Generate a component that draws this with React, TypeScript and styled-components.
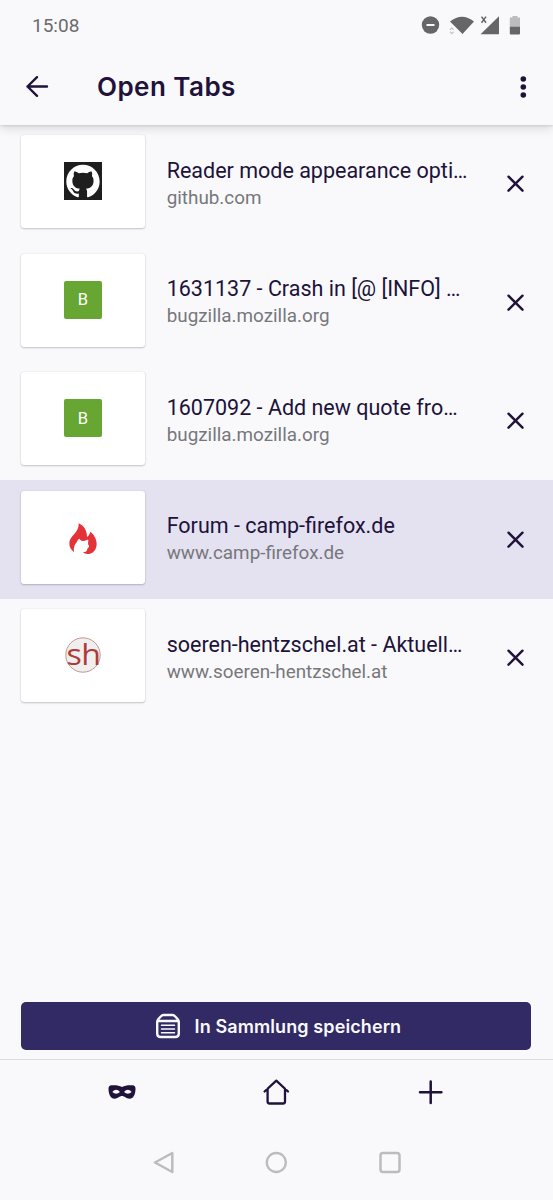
import React from 'react';
import styled, { createGlobalStyle } from 'styled-components';

const ink = '#20123a';
const GlobalStyle = createGlobalStyle`
  *, *::before, *::after { box-sizing: border-box; }
  body { margin: 0; background: #f9f9fb; }
  button { border: 0; padding: 0; background: none; color: inherit; font: inherit; display: flex; }
  svg { display: block; flex: none; overflow: visible; }
`;

const Screen = styled.div`
  width: 553px;
  height: 1200px;
  display: flex;
  flex-direction: column;
  overflow: hidden;
  background: #f9f9fb;
  color: ${ink};
  font-family: Roboto, 'Liberation Sans', sans-serif;
`;

const Header = styled.header`
  flex: none;
  height: 124.5px;
  background: #f9f9fb;
  box-shadow: 0 1px 2px rgba(0, 0, 0, 0.1), 0 3px 10px rgba(0, 0, 0, 0.14);
  z-index: 1;
`;

const StatusBar = styled.div`
  height: 50px;
  padding: 0 32px;
  display: flex;
  align-items: center;
  justify-content: space-between;
  color: #6b6b6d;
`;

const Clock = styled.span`
  font-size: 19px;
  line-height: 24px;
  padding-top: 2px;
`;

const StatusIcons = styled.svg`
  width: 103px;
  height: 24px;
`;

const Toolbar = styled.div`
  height: 74px;
  padding: 0 19px 0 25px;
  display: flex;
  align-items: center;
`;

const Heading = styled.h1`
  flex: 1;
  margin: 0 0 0 48px;
  font: 600 26px/32px Inter, sans-serif;
  letter-spacing: 0.45px;
`;

const TabList = styled.ul`
  flex: 1;
  margin: 0;
  padding: 0;
  list-style: none;
`;

const TabRow = styled.li<{ $selected?: boolean }>`
  height: 118.5px;
  padding: 0 27px 0 21.4px;
  display: flex;
  align-items: center;
  background: ${(p) => (p.$selected ? '#e4e1f1' : 'transparent')};
`;

const Thumbnail = styled.div`
  flex: none;
  width: 124px;
  height: 93px;
  padding: 0 0.8px 1px 0;
  margin-bottom: 4.2px;
  border-radius: 3px;
  display: flex;
  align-items: center;
  justify-content: center;
  background: #fff;
  box-shadow: 0 1px 2px rgba(0, 0, 0, 0.2), 0 0 2px rgba(0, 0, 0, 0.1);
`;

const Letter = styled.span`
  width: 38px;
  height: 38px;
  border-radius: 2px;
  display: flex;
  align-items: center;
  justify-content: center;
  background: #67a632;
  color: #fff;
  font-size: 16.5px;
`;

const TabText = styled.div`
  flex: 1;
  min-width: 0;
  margin: 0 30px 0.2px 21.3px;
`;

const TabTitle = styled.div`
  font-size: 21.5px;
  line-height: 28px;
  white-space: nowrap;
`;

const TabUrl = styled.div`
  font-size: 18.85px;
  line-height: 26px;
  color: #77777b;
  white-space: nowrap;
`;

const SaveButton = styled.button`
  flex: none;
  height: 48px;
  margin: 0 21.6px 8.5px 21.4px;
  padding-left: 3px;
  border-radius: 5px;
  align-items: center;
  justify-content: center;
  gap: 14px;
  background: #312a65;
  color: #f9f9fb;
  font: 600 18px/24px Inter, sans-serif;
  letter-spacing: 0.1px;
`;

const SaveLabel = styled.span`
  padding-top: 1px;
`;

const ActionBar = styled.nav`
  flex: none;
  height: 67px;
  border-top: 1px solid #dcdce0;
  padding: 0 106.5px 1px 106px;
  display: flex;
  align-items: center;
  justify-content: space-between;
`;

const SystemBar = styled.nav`
  flex: none;
  height: 74.5px;
  padding: 0 150.5px 0 149.5px;
  display: flex;
  align-items: center;
  justify-content: space-between;
  color: #bcbcbe;
`;

const GithubIcon = () => (
  <svg width="38" height="38" viewBox="0 0 38 38">
    <path fill="#1f1e1f" d="M0 0h38v38H0z" />
    <path
      transform="translate(2.3 2.3) scale(1.39)"
      fill="#fff"
      d="M12 .297c-6.63 0-12 5.373-12 12 0 5.303 3.438 9.8 8.205 11.385.6.113.82-.258.82-.577 0-.285-.01-1.04-.015-2.04-3.338.724-4.042-1.61-4.042-1.61C4.422 18.07 3.633 17.7 3.633 17.7c-1.087-.744.084-.729.084-.729 1.205.084 1.838 1.236 1.838 1.236 1.07 1.835 2.809 1.305 3.495.998.108-.776.417-1.305.76-1.605-2.665-.3-5.466-1.332-5.466-5.93 0-1.31.465-2.38 1.235-3.22-.135-.303-.54-1.523.105-3.176 0 0 1.005-.322 3.3 1.23.96-.267 1.98-.399 3-.405 1.02.006 2.04.138 3 .405 2.28-1.552 3.285-1.23 3.285-1.23.645 1.653.24 2.873.12 3.176.765.84 1.23 1.91 1.23 3.22 0 4.61-2.805 5.625-5.475 5.92.42.36.81 1.096.81 2.22 0 1.606-.015 2.896-.015 3.286 0 .315.21.69.825.57C20.565 22.092 24 17.592 24 12.297c0-6.627-5.373-12-12-12"
    />
  </svg>
);

const FlameIcon = () => (
  <svg width="38" height="38" viewBox="0 0 114 114" fill="#e53238">
    <path d="M44 16C59 22 69 37 69 57C74 53 77 49 79 41C89 48 98 63 98 77C98 96 86 108 71 108C65 108 60 106 57 102C64 103 70 99 70 92C76 88 77 84 72 79L73 66C68 64 65 69 60 69C55 69 50 68 46 62L42 65L38 73C32 79 28 90 30 102C21 95 16 87 16 77C15 53 46 46 44 16Z" />
  </svg>
);

const ShIcon = () => (
  <svg width="38" height="38" viewBox="0 0 38 38">
    <circle cx="19" cy="19" r="17.2" fill="#efefef" stroke="#c08a80" strokeWidth="0.9" />
    <text
      x="2.5"
      y="28.6"
      fontFamily="'Open Sans', sans-serif"
      fontSize="30"
      fontWeight="400"
      letterSpacing="-0.5"
      textLength="34"
      lengthAdjust="spacingAndGlyphs"
      fill="#b03a34"
    >
      sh
    </text>
  </svg>
);

const CloseIcon = () => (
  <svg width="21" height="21" viewBox="0 0 21 21" fill="none" stroke={ink} strokeWidth="2.4" strokeLinecap="round">
    <path d="M3.5 3.7l14 14M17.5 3.7l-14 14" />
  </svg>
);

const tabs = [
  { title: 'Reader mode appearance opti…', url: 'github.com', icon: <GithubIcon /> },
  { title: '1631137 - Crash in [@ [INFO] …', url: 'bugzilla.mozilla.org', icon: <Letter>B</Letter> },
  { title: '1607092 - Add new quote fro…', url: 'bugzilla.mozilla.org', icon: <Letter>B</Letter> },
  { title: 'Forum - camp-firefox.de', url: 'www.camp-firefox.de', icon: <FlameIcon />, selected: true },
  { title: 'soeren-hentzschel.at - Aktuell…', url: 'www.soeren-hentzschel.at', icon: <ShIcon /> },
];

export default function App() {
  return (
    <Screen>
      <GlobalStyle />
      <Header>
        <StatusBar>
          <Clock>15:08</Clock>
          <StatusIcons viewBox="0 0 103 24" fill="#666668">
            <circle cx="12.5" cy="12" r="8.7" />
            <path d="M8.5 12h8" stroke="#f9f9fb" strokeWidth="2" />
            <path d="M32 8.5Q44 -1 56 8.5L44.5 21Z" />
            <path d="M32 16.8l1.8-1.8 1.8 1.8M32 18.8l1.8 1.8 1.8-1.8" fill="none" stroke="#c5c5c7" strokeWidth="1.3" />
            <path d="M62.5 21.2L81 3.3V21.2Z" />
            <path d="M63.5 3.6l4.5 6.2M68 3.6l-4.5 6.2" stroke="#666668" strokeWidth="1.5" />
            <path fill="#bcbcbe" d="M94.5 3h5v1.5h2.5V14H91.8V4.5h2.7z" />
            <path d="M91.8 13.8H102v6.7q0 1-1 1h-8.2q-1 0-1-1z" />
          </StatusIcons>
        </StatusBar>
        <Toolbar>
          <button aria-label="Back">
            <svg width="24" height="24" viewBox="0 0 24 24" fill="none" stroke={ink} strokeWidth="2.4" strokeLinecap="round" strokeLinejoin="round">
              <path d="M22 11.5H2.5M12 2.2L2.5 11.5l9.5 9.3" />
            </svg>
          </button>
          <Heading>Open Tabs</Heading>
          <button aria-label="Menu">
            <svg width="22" height="24" viewBox="0 0 22 24" fill={ink}>
              <circle cx="11.3" cy="4" r="2.8" />
              <circle cx="11.3" cy="12" r="2.8" />
              <circle cx="11.3" cy="20" r="2.8" />
            </svg>
          </button>
        </Toolbar>
      </Header>
      <TabList>
        {tabs.map((tab) => (
          <TabRow key={tab.title} $selected={tab.selected}>
            <Thumbnail>{tab.icon}</Thumbnail>
            <TabText>
              <TabTitle>{tab.title}</TabTitle>
              <TabUrl>{tab.url}</TabUrl>
            </TabText>
            <button aria-label="Close tab"><CloseIcon /></button>
          </TabRow>
        ))}
      </TabList>
      <SaveButton>
        <svg width="26" height="26" viewBox="0 0 26 26" fill="none" stroke="#f9f9fb" strokeLinecap="round" strokeLinejoin="round">
          <path strokeWidth="2.4" d="M2.2 9Q2.2 7.5 3.2 6.3L6 3.2Q7 2 8.5 2h9Q19 2 20 3.2L22.8 6.3Q23.8 7.5 23.8 9V20.5Q23.8 24 20.3 24H5.7Q2.2 24 2.2 20.5ZM2.8 8H23.2" />
          <path strokeWidth="1.5" d="M6.5 12.2h13M6.5 16h13M6.5 19.8h13" />
        </svg>
        <SaveLabel>In Sammlung speichern</SaveLabel>
      </SaveButton>
      <ActionBar>
        <button aria-label="Private tabs">
          <svg width="32" height="32" viewBox="0 0 32 32">
            <path fill={ink} fillRule="evenodd" d="M16 11C19 9.2 23 9 26.5 9.3Q29.5 9.5 29.5 12.5C29.5 18 27.5 22.7 23.5 22.7C20 22.7 18.500 20 16 20C13.500 20 12 22.7 8.5 22.7C4.5 22.7 2.5 18 2.5 12.5Q2.5 9.5 5.500 9.3C9 9 13 9.2 16 11ZM6.300 16Q10.200 11.300 14 16Q10.200 19.500 6.300 16ZM18 16Q21.800 11.300 25.700 16Q21.800 19.500 18 16Z" />
          </svg>
        </button>
        <button aria-label="Home">
          <svg width="32" height="32" viewBox="0 0 32 32" fill="none" stroke={ink} strokeWidth="2.3" strokeLinecap="round" strokeLinejoin="round">
            <path d="M4.6 15.5L16.3 4.7L28 15.5M7.6 13V25.5Q7.6 27.5 9.6 27.5H23Q25 27.5 25 25.5V13" />
          </svg>
        </button>
        <button aria-label="New tab">
          <svg width="32" height="32" viewBox="0 0 32 32" fill="none" stroke={ink} strokeWidth="2.5" strokeLinecap="round">
            <path d="M5 16.3H26.400M15.700 5.600V27" />
          </svg>
        </button>
      </ActionBar>
      <SystemBar>
        <svg width="26" height="26" viewBox="0 0 26 26" fill="none" stroke="currentColor" strokeWidth="2.5" strokeLinejoin="round">
          <path d="M5 12.5L22.300 3V22Z" />
        </svg>
        <svg width="26" height="26" viewBox="0 0 26 26" fill="none" stroke="currentColor" strokeWidth="2.3">
          <circle cx="13.3" cy="12.5" r="9.5" />
        </svg>
        <svg width="26" height="26" viewBox="0 0 26 26" fill="none" stroke="currentColor" strokeWidth="2.5">
          <rect x="3.5" y="3" width="19" height="19" rx="2.5" />
        </svg>
      </SystemBar>
    </Screen>
  );
}
